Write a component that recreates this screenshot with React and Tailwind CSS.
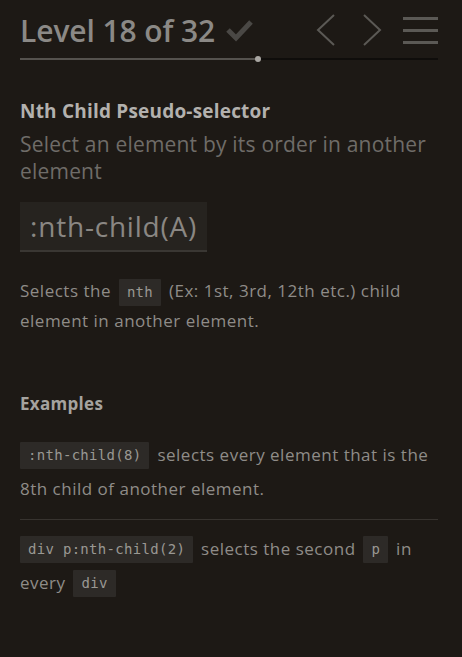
const mono = "font-['DejaVu_Sans_Mono',monospace]";

function Code({ children, first }) {
  return (
    <code className={`${mono} ${first ? "mr-[3px]" : "mx-[3px]"} inline-block rounded-[1px] bg-[#2d2a27] px-[8px] py-[4px] align-middle text-[14px] leading-[19px] tracking-[0.3px] text-[#9a9893]`}>
      {children}
    </code>
  );
}

export default function App() {
  return (
    <div className="min-h-[657px] w-[462px] bg-[#1d1915] pl-[20px] pr-[24px] pt-[10px] font-['Open_Sans',sans-serif] text-[#8f8c88]">
      <header className="flex h-[40px] items-center">
        <h1 className="text-[30px] font-semibold tracking-[-0.1px] text-[#8b8986]">Level 18 of 32</h1>
        <svg className="ml-[11px] h-[24px] w-[27px]" viewBox="0 0 27 24">
          <path d="M2 12 L10 20 L25 4" fill="none" stroke="#4a4845" strokeWidth="5" />
        </svg>
        <div className="ml-auto flex items-center">
          <svg className="h-[34px] w-[20px]" viewBox="0 0 20 34">
            <path d="M18 2 L2 17 L18 32" fill="none" stroke="#5b5955" strokeWidth="2" />
          </svg>
          <svg className="ml-[26px] h-[34px] w-[20px]" viewBox="0 0 20 34">
            <path d="M2 2 L18 17 L2 32" fill="none" stroke="#5b5955" strokeWidth="2" />
          </svg>
          <div className="ml-[21px] flex w-[35px] flex-col gap-[9px]">
            <span className="h-[3px] bg-[#5b5955]" />
            <span className="h-[3px] bg-[#5b5955]" />
            <span className="h-[3px] bg-[#5b5955]" />
          </div>
        </div>
      </header>

      <div className="relative mt-[8px] flex h-[2px] items-center">
        <div className="h-[2px] w-[238px] bg-[#55524e]" />
        <div className="h-[2px] flex-1 bg-[#0f0d0b]" />
        <span className="absolute left-[235px] top-[-2px] h-[6px] w-[6px] rounded-full bg-[#aaa7a3]" />
      </div>

      <h2 className="mt-[36px] text-[19px] font-bold leading-[30px] tracking-[0.2px] text-[#b3b1ae]">Nth Child Pseudo-selector</h2>
      <p className="mt-[5px] text-[21px] leading-[27px] tracking-[0.2px] text-[#6f6c68]">Select an element by its order in another element</p>

      <div className="mt-[17px] inline-block border-b-2 border-[#3a3733] bg-[#26231f] px-[10px] py-[5px] text-[28px] leading-[38px] tracking-[0.8px] text-[#8a8783]">
        :nth-child(A)
      </div>

      <p className="mt-[24px] text-[17px] leading-[30px] tracking-[0.5px] text-[#8f8c88]">
        Selects the <Code>nth</Code> (Ex: 1st, 3rd, 12th etc.) child element in another element.
      </p>

      <h3 className="mt-[55px] text-[17px] font-bold tracking-[0.3px] text-[#a5a39f]">Examples</h3>

      <p className="mt-[21px] text-[17px] leading-[34px] tracking-[0.5px]">
        <Code first>:nth-child(8)</Code> selects every element that is the 8th child of another element.
      </p>
      <div className="mt-[13px] h-px bg-[#37332f]" />
      <p className="mt-[12px] text-[17px] leading-[34px] tracking-[0.5px]">
        <Code first>div p:nth-child(2)</Code> selects the second <Code>p</Code> in every <Code>div</Code>
      </p>
    </div>
  );
}
